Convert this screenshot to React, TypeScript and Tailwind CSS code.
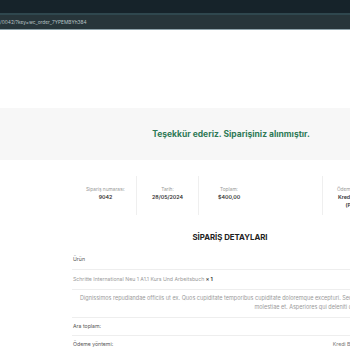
import React from "react";

export default function App() {
  const font = { fontFamily: "Inter, 'Noto Sans', sans-serif" };
  return (
    <div className="w-[350px] h-[350px] overflow-hidden bg-white" style={font}>
      <div className="w-[460px]">
        {/* browser chrome */}
        <div className="h-[13px] bg-[#16232a]" />
        <div className="h-[2px] bg-[#2f474e]" />
        <div className="h-[14px] bg-[#27353a] flex items-center">
          <span className="text-[4.8px] leading-none text-[#b8c2c6]">/0042/?key=wc_order_7YPEMBYh384</span>
        </div>
        <div className="h-[1px] bg-[#8fa3ab]" />
        <div className="h-[78px]" />
        {/* thank you band */}
        <div className="h-[52px] bg-[#f7f7f7] flex items-center justify-center">
          <p className="text-[8.5px] font-bold text-[#2f7a56] ml-[2px]">Teşekkür ederiz. Siparişiniz alınmıştır.</p>
        </div>
        {/* content */}
        <div className="ml-[72px] w-[316px]">
          <ul className="flex mt-[16px] ml-[3px]">
            <li className="w-[62px] border-r border-[#efefef] pt-[9px] pb-[9px] text-center">
              <div className="text-[4.8px] leading-[8px] text-[#9a9a9a]">Sipariş numarası:</div>
              <div className="text-[5.3px] leading-[9px] font-semibold text-[#333]">9042</div>
            </li>
            <li className="w-[62px] border-r border-[#efefef] pt-[9px] pb-[9px] text-center">
              <div className="text-[4.8px] leading-[8px] text-[#9a9a9a]">Tarih:</div>
              <div className="text-[5.3px] leading-[9px] font-semibold text-[#333]">28/05/2024</div>
            </li>
            <li className="w-[123px] pt-[9px] pb-[9px] pl-[19px]">
              <div className="text-[4.8px] leading-[8px] text-[#9a9a9a] pl-[2px]">Toplam:</div>
              <div className="text-[5.3px] leading-[9px] font-semibold text-[#333]">$400,00</div>
            </li>
            <li className="w-[66px] border-l border-[#efefef] pt-[9px] pb-[6px] text-center">
              <div className="text-[4.8px] leading-[8px] text-[#9a9a9a]">Ödeme yöntemi:</div>
              <div className="text-[5.3px] leading-[8px] font-semibold text-[#333]">Kredi Bankası<br />(PayTR)</div>
            </li>
          </ul>
          <h2 className="text-[7.8px] font-bold text-[#222] text-center mt-[17px] leading-[10px]">SİPARİŞ DETAYLARI</h2>
          <div className="mt-[8px] text-[5.2px]">
            <div className="h-[20px] flex items-center justify-between px-[1px] border-b border-[#eeeeee]">
              <span className="text-[#555]">Ürün</span>
              <span className="text-[#555]">Toplam</span>
            </div>
            <div className="h-[20px] flex items-center justify-between px-[1px] border-b border-[#eeeeee]">
              <span className="text-[#9a9a9a]">Schritte International Neu 1 A1.1 Kurs Und Arbeitsbuch <b className="text-[#444]">× 1</b></span>
              <span className="text-[#9a9a9a]">$400,00</span>
            </div>
            <div className="pt-[4px] pb-[5px] pl-[5px] pr-[5px] border-b border-[#eeeeee] text-right text-[#9a9a9a] leading-[9px] text-[5.5px]">
              Dignissimos repudiandae officiis ut ex. Quos cupiditate temporibus cupiditate doloremque excepturi. Sed dolore quia
              <br />
              molestiae et. Asperiores qui deleniti quis aliquam.
            </div>
            <div className="h-[18px] flex items-center justify-between px-[1px] border-b border-[#eeeeee]">
              <span className="text-[#555]">Ara toplam:</span>
              <span className="text-[#555]">$400,00</span>
            </div>
            <div className="h-[19px] flex items-center justify-between px-[1px] border-b border-[#eeeeee]">
              <span className="text-[#555]">Ödeme yöntemi:</span>
              <span className="text-[#777]">Kredi Bankası (PayTR)</span>
            </div>
          </div>
        </div>
      </div>
    </div>
  );
}
